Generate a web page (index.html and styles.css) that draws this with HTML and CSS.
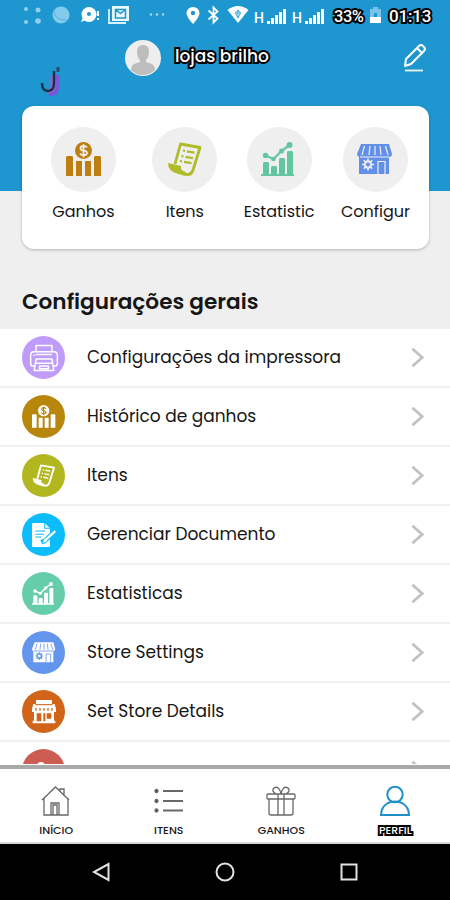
FILE: index.html
```html
<!DOCTYPE html>
<html lang="pt">
<head>
<meta charset="utf-8">
<title>Perfil</title>
<link rel="stylesheet" href="styles.css">
</head>
<body>
<svg class="defs">
	<symbol id="money" viewBox="0 0 36 36">
		<path fill="currentColor" d="M1 14h5l1 1v19H0V15zM10 19h6v15h-6zM19 19h6v15h-6zM29 14h5l1 1v19h-7V15z"/>
		<circle cx="17.5" cy="8.5" r="8.5" fill="currentColor"/>
		<path class="cut sign" d="M21 5.500q-1-1.500-3.500-1.500-3 0-3 2.200t3 2.400q3.500.2 3.500 2.400t-3.500 2.200q-2.500 0-3.500-1.700M17.500 2.300v13"/>
	</symbol>
	<symbol id="receipt" viewBox="0 0 36 36">
		<path fill="none" stroke="currentColor" stroke-width="2.800" stroke-linejoin="round" d="M8 22L13.500 2 33 5.500 26 28q-2 6-8 4"/>
		<path fill="currentColor" d="M1 21l13 3q-1 5 5 6l-1 4-8-2.500Q1 29 1 21z"/>
		<path fill="none" stroke="currentColor" stroke-width="2.200" d="M16 8.500l2 .4m2 .4l7.500 1.400M14.500 14l2 .4m2 .4l7.500 1.400M13 19l2 .4m2 .4l7.500 1.400"/>
	</symbol>
	<symbol id="chart" viewBox="0 0 36 36">
		<path fill="currentColor" d="M0 32h33v2H0zM2 21l1-1h4l1 1v12H2zM10 25l1-1h4l1 1v8h-6zM18 17l1-1h4l1 1v16h-6zM26 10l1-1h4l1 1v23h-6z"/>
		<path fill="none" stroke="currentColor" stroke-width="2.200" d="M4.500 13.500l8 3.500 8-8 8-6"/>
		<g fill="currentColor"><circle cx="4.500" cy="13.500" r="2.700"/><circle cx="12.500" cy="17" r="2.300"/><circle cx="20.500" cy="9" r="2.500"/><circle cx="28.500" cy="3" r="3"/></g>
	</symbol>
	<symbol id="shop" viewBox="0 0 36 36">
		<path fill="currentColor" d="M4 2h28l3 10q0 3-3 3v17H2V15q-2-1-2-3z"/>
		<path class="cut thin" d="M7.500 4L5 13M13 4l-1 9M18 4v9M23 4l1 9M28.500 4L31 13M3 15h29M21 32V19.500h7V32"/>
		<circle class="cut" cx="11" cy="22.500" r="3.500"/>
		<path class="cut" d="M11 16.500v12M5 22.500h12M6.800 18.300l8.400 8.400M15.200 18.300l-8.400 8.400"/>
		<circle cx="11" cy="22.500" r="2" fill="currentColor"/>
	</symbol>
	<symbol id="printer" viewBox="0 0 36 36">
		<g fill="none" stroke="currentColor" stroke-width="1.700" stroke-linejoin="round">
			<path d="M9 11V4h18v7M7 27H5q-2 0-2-3v-9q0-4 4-4h22q4 0 4 4v9q0 3-2 3h-2"/>
			<path d="M9 14h18M7 32l2-13h18l2 13zM8 24h20M13 27h10v3H13zM6 15h2"/>
		</g>
	</symbol>
	<symbol id="document" viewBox="0 0 36 36">
		<path fill="currentColor" d="M2 0h17l8 8v26q0 2-2 2H2q-2 0-2-2V2q0-2 2-2z"/>
		<path class="cut" d="M19 0v8h8M5 12h15M5 17h13M5 21h9"/>
		<path class="cut wide" d="M36 11L20 26l-6 3"/>
		<path stroke="currentColor" stroke-width="3.500" fill="none" d="M35 12L21 25"/>
		<path fill="currentColor" d="M19 23l4 4-7 3z"/>
	</symbol>
	<symbol id="storefront" viewBox="0 0 36 36">
		<path fill="currentColor" d="M6 0h24v6h4l2 7v5H0v-5l2-7h4zM3 18h30v13h2v4H1v-4h2z"/>
		<path class="cut" d="M5 7h26"/>
		<path class="block" d="M7 20h7v12H7zM17 20h3v12h-3zM22 20h7v8h-7zM5 12h2v4H5zM11 12h2v4h-2zM17 12h2v4h-2zM23 12h2v4h-2zM29 12h2v4h-2z"/>
	</symbol>
	<symbol id="arrow" viewBox="0 0 14 22">
		<path fill="none" stroke="#c2c2c2" stroke-width="3" d="M1.500 1.500L12 11 1.500 20.500"/>
	</symbol>
</svg>

<div class="top">
	<div class="status">
		<svg width="250" height="32" viewBox="0 0 250 32">
			<g fill="#8fd0ef"><circle cx="26" cy="9" r="2"/><circle cx="38" cy="10" r="2.500"/><circle cx="26" cy="22" r="2"/><circle cx="38" cy="21" r="2.800"/></g>
			<circle cx="61" cy="15" r="8.500" fill="#82cbed"/>
			<path fill="none" stroke="#5dafe0" d="M54 11q1 10 13 9"/>
			<circle cx="89" cy="14.500" r="7.500" fill="#fff"/><path fill="#fff" d="M83 17l-2 5 5-2zM97 11h2v5h-2zM97 18h2v2h-2z"/><circle cx="89" cy="14" r="2" fill="#1e96cf"/>
			<path fill="none" stroke="#d9f1fb" stroke-width="1.800" d="M109 9v14h17"/><path fill="#e8f8ff" d="M112 6h17v15h-17z"/><path fill="none" stroke="#1e96cf" stroke-width="1.500" d="M115.500 9.500h10v8.500h-10zl5 4 5-4"/>
			<g fill="#a6daf2"><circle cx="151" cy="14.500" r="1.200"/><circle cx="157" cy="14.500" r="1.200"/><circle cx="163" cy="14.500" r="1.200"/></g>
			<path fill="#fff" d="M193 24q-6.500-7-6.500-11a6.500 6 0 0 1 13 0q0 4-6.500 11z"/><circle cx="193" cy="13" r="2.200" fill="#1e96cf"/>
			<path fill="none" stroke="#fff" stroke-width="1.800" d="M208.500 10.500l9 8-4 4V7.500l4 4-9 8"/>
			<path fill="#fff" d="M227.500 10q10.500-8 21 0L238 23z"/><path fill="none" stroke="#1e96cf" stroke-width=".8" d="M235.500 13l2.500-3 2.500 3-2.500 5zM238 10v8M235 13h6"/>
		</svg>
		<span class="net">H</span>
		<svg width="20" height="16" viewBox="0 0 20 16"><path fill="#fff" d="M0 13h3v3H0zM4 10h3v6H4zM8 7h3v9H8zM12 4h3v12h-3zM16 1h3v15h-3z"/></svg>
		<span class="net second">H</span>
		<svg width="20" height="16" viewBox="0 0 20 16"><path fill="#fff" d="M0 13h3v3H0zM4 10h3v6H4zM8 7h3v9H8zM12 4h3v12h-3zM16 1h3v15h-3z"/></svg>
		<span class="outlined percent">33%</span>
		<svg class="battery" width="11" height="16" viewBox="0 0 11 16"><path fill="#79c3e9" d="M3 0h5v2h3v9H0V2h3z"/><path fill="#fff" d="M0 10h11v6H0z"/><path fill="#1e96cf" d="M4 6h3v4H4z"/></svg>
		<span class="outlined clock">01:13</span>
	</div>
	<div class="profile">
		<svg class="logo" width="22" height="32" viewBox="0 0 22 32">
			<path fill="none" stroke="#8f68c4" stroke-width="5" d="M13 9v11q0 6-6 6"/>
			<path fill="none" stroke="#7a55dc" stroke-width="3.500" d="M17.500 9v12q0 7-8.500 8"/>
			<path fill="none" stroke="#17304b" stroke-width="2.400" d="M2 17q0 8 6 8 6 0 6-8V5"/>
			<path fill="none" stroke="#2d4a70" stroke-width="3" d="M18 1v5"/>
		</svg>
		<svg class="avatar" width="36" height="36" viewBox="0 0 36 36">
			<circle cx="18" cy="18" r="18" fill="#eee"/>
			<path fill="#bdbdbd" d="M18 5q6 0 6 7 0 5-3 8v2l6 2q3 2 3 6-5 5-12 5T6 30q0-4 3-6l6-2v-2q-3-3-3-8 0-7 6-7z"/>
		</svg>
		<span class="outlined name">lojas brilho</span>
		<svg class="edit" width="24" height="28" viewBox="0 0 24 28">
			<path fill="none" stroke="#fff" stroke-width="2" stroke-linejoin="round" d="M2 22l1-7L16 2q2-2 4 0l1 1q2 2 0 4L8 20zM14 4l5 5"/>
			<path stroke="#e9f7fd" stroke-width="1.800" d="M2 26.500h18"/>
		</svg>
	</div>
	<div class="card">
		<div class="item c-gold"><i><svg><use href="#money"/></svg></i><span>Ganhos</span></div>
		<div class="item c-olive"><i><svg><use href="#receipt"/></svg></i><span>Itens</span></div>
		<div class="item c-green"><i><svg><use href="#chart"/></svg></i><span>Estatistic</span></div>
		<div class="item c-blue"><i><svg><use href="#shop"/></svg></i><span>Configur</span></div>
	</div>
	<h2>Configurações gerais</h2>
</div>

<ul class="list">
	<li><i class="bg-purple"><svg class="large"><use href="#printer"/></svg></i><span>Configurações da impressora</span><svg class="go"><use href="#arrow"/></svg></li>
	<li><i class="bg-gold"><svg><use href="#money"/></svg></i><span>Histórico de ganhos</span><svg class="go"><use href="#arrow"/></svg></li>
	<li><i class="bg-olive"><svg><use href="#receipt"/></svg></i><span>Itens</span><svg class="go"><use href="#arrow"/></svg></li>
	<li><i class="bg-sky"><svg><use href="#document"/></svg></i><span>Gerenciar Documento</span><svg class="go"><use href="#arrow"/></svg></li>
	<li><i class="bg-green"><svg><use href="#chart"/></svg></i><span>Estatisticas</span><svg class="go"><use href="#arrow"/></svg></li>
	<li><i class="bg-blue"><svg><use href="#shop"/></svg></i><span>Store Settings</span><svg class="go"><use href="#arrow"/></svg></li>
	<li><i class="bg-orange"><svg><use href="#storefront"/></svg></i><span>Set Store Details</span><svg class="go"><use href="#arrow"/></svg></li>
	<li><i class="bg-red"><svg viewBox="0 0 24 24"><circle cx="9" cy="7" r="4" fill="#fff"/></svg></i><svg class="go"><use href="#arrow"/></svg></li>
</ul>

<div class="tabs">
	<div class="tab">
		<svg viewBox="0 0 30 30"><path d="M1 14L14.500 1 28 14M3 12v17h24V12M10 29V17h8v12M12 29V19h4v10M19 5V3h4v6"/></svg>
		<span>INÍCIO</span>
	</div>
	<div class="tab">
		<svg viewBox="0 0 30 30"><g class="dots"><circle cx="2.500" cy="5" r="1.500"/><circle cx="2.500" cy="15" r="1.500"/><circle cx="2.500" cy="24.500" r="1.500"/></g><path class="bold" d="M9 5h20M9 15h20M9 24.500h20"/></svg>
		<span>ITENS</span>
	</div>
	<div class="tab">
		<svg viewBox="0 0 30 30"><rect x="1" y="8" width="28" height="5" rx="1"/><path d="M3 13v14q0 2 2 2h20q2 0 2-2V13M12 8v21M18 8v21M10 8Q5 5 8 2q5-3 7 6M20 8q5-3 2-6-5-3-7 6"/></svg>
		<span>GANHOS</span>
	</div>
	<div class="tab active">
		<svg viewBox="0 0 30 30"><circle cx="15" cy="8.500" r="7.700"/><path d="M1 29q0-8 7-12 7-3 14 0 7 4 7 12z"/></svg>
		<span class="outlined">PERFIL</span>
	</div>
</div>
<div class="nav">
	<svg viewBox="0 0 20 20"><path d="M17.500 2v16L3 10z"/></svg>
	<svg viewBox="0 0 20 20"><circle cx="10" cy="10" r="8.500"/></svg>
	<svg viewBox="0 0 20 20"><path d="M2.500 2.500h15v15h-15z"/></svg>
</div>
</body>
</html>
```
FILE: styles.css
```css
*{margin: 0;padding: 0;box-sizing: border-box;}
body{
	width: 450px;
	height: 900px;
	overflow: hidden;
	display: flex;
	flex-direction: column;
	background: #fff;
	color: #161616;
	font-family: Poppins, Inter, "Liberation Sans", sans-serif;
}
svg{
	display: block;
	flex: none;
}
.defs{
	position: absolute;
	width: 0;
	height: 0;
}
.cut{
	fill: none;
	stroke: var(--back);
	stroke-width: 1.6;
}
.cut.thin{
	stroke-width: 1.2;
}
.cut.sign{
	stroke-width: 1.8;
}
.cut.wide{
	stroke-width: 7;
}
.block{
	fill: var(--back);
}
.outlined{
	color: #fff;
	-webkit-text-stroke: 4px #000;
	paint-order: stroke fill;
}
.top{
	height: 329px;
	background: linear-gradient(#1e96cf 191px, #efefef 191px);
}
.status{
	display: flex;
	align-items: center;
	height: 32px;
	color: #fff;
	font-family: Roboto, sans-serif;
}
.net{
	margin: 3px 4px 0;
	width: 9px;
	font-size: 14px;
	font-weight: 500;
}
.net.second{
	margin-left: 5px;
}
.percent{
	margin-left: 9px;
	width: 32px;
	font-size: 16.5px;
	font-weight: 500;
	letter-spacing: -.5px;
}
.battery{
	margin: -3px 8px 0 4px;
}
.clock{
	font-size: 17px;
	font-weight: 500;
	letter-spacing: -.2px;
}
.profile{
	display: flex;
	height: 74px;
	padding: 8px 23px 0 40px;
}
.logo{
	margin-top: 26px;
}
.avatar{
	margin: 0 14px 0 63px;
}
.name{
	padding-top: 5px;
	font-size: 17px;
	line-height: 22px;
	font-weight: 500;
}
.edit{
	margin: 4px 0 0 auto;
}
.card{
	display: flex;
	width: 407px;
	height: 143px;
	margin: 0 0 0 22px;
	padding: 21px 21px 0 29px;
	justify-content: space-between;
	background: #fff;
	border-radius: 12px;
	box-shadow: 0 1px 3px rgba(0,0,0,.25);
}
.item{
	--back: #efefef;
	display: flex;
	flex-direction: column;
	align-items: center;
	width: 65px;
}
.item.c-olive{
	margin: 0 -4px 0 4px;
}
.item.c-green{
	margin: 0 -1px 0 1px;
}
.item i{
	display: flex;
	align-items: center;
	justify-content: center;
	width: 65px;
	height: 65px;
	border-radius: 50%;
	background: #efefef;
}
.item svg{
	width: 36px;
	height: 36px;
}
.item span{
	margin-top: 8px;
	color: #161616;
	font-size: 16px;
	line-height: 23px;
}
.c-gold{color: #bd7f12;}
.c-olive{color: #b0bb2a;}
.c-green{color: #62c7a0;}
.c-blue{color: #628fe8;}
h2{
	padding: 38px 0 0 22px;
	font-size: 21.6px;
	line-height: 29px;
	font-weight: 600;
}
.list{
	height: 435px;
	overflow: hidden;
	list-style: none;
}
.list li{
	display: flex;
	align-items: center;
	height: 59px;
	padding: 0 26px 0 22px;
	border-bottom: 2px solid #f0f0f0;
	font-size: 17px;
}
.list i{
	display: flex;
	align-items: center;
	justify-content: center;
	width: 43px;
	height: 43px;
	margin-right: 22px;
	border-radius: 50%;
	background: var(--back);
	color: #fff;
}
.list i svg{
	width: 24px;
	height: 24px;
}
.list i .large{
	width: 32px;
	height: 32px;
}
.list .go{
	width: 13px;
	height: 21px;
	margin-left: auto;
}
.list span{
	padding-bottom: 2px;
}
.bg-purple{--back: #bf9bfa;}
.bg-gold{--back: #b8860b;}
.bg-olive{--back: #b2b61f;}
.bg-sky{--back: #0cbcfb;}
.bg-green{--back: #66cdaa;}
.bg-blue{--back: #6495ed;}
.bg-orange{--back: #d2641a;}
.bg-red{--back: #cd5c52;}
.tabs{
	display: flex;
	height: 79px;
	margin-top: 1px;
	padding-top: 17px;
	border-top: 4px solid #a9a9a9;
	border-bottom: 2px solid #d8d8d8;
}
.tab{
	display: flex;
	flex-direction: column;
	align-items: center;
	width: 113px;
	font-size: 11px;
	line-height: 14px;
	font-weight: 500;
}
.tab svg{
	width: 30px;
	height: 30px;
	margin-bottom: 7px;
	fill: none;
	stroke: #686868;
	stroke-width: 1.3;
}
.tab .bold{
	stroke-width: 2;
}
.tab .dots{
	fill: #4a4a4a;
}
.tab.active{
	padding-left: 3px;
}
.tab.active svg{
	stroke: #1e8fc8;
	stroke-width: 2;
}
.nav{
	display: flex;
	flex: 1;
	align-items: center;
	justify-content: center;
	gap: 104px;
	background: #000;
}
.nav svg{
	width: 20px;
	height: 20px;
	fill: none;
	stroke: #e2e2e2;
	stroke-width: 2;
}
```
